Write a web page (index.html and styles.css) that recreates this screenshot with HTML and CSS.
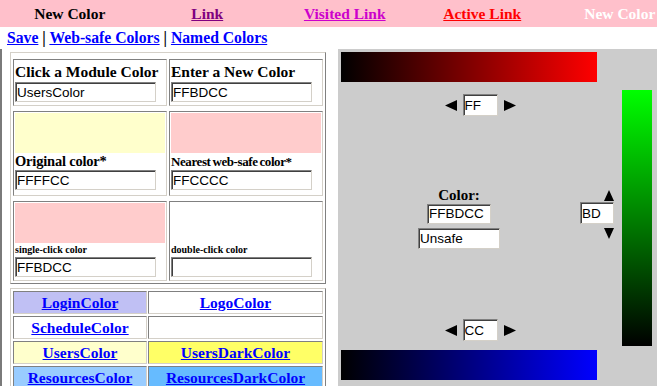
FILE: index.html
```html
<!DOCTYPE html>
<html lang="en">
<head>
    <meta charset="UTF-8">
    <meta name="viewport" content="width=device-width, initial-scale=1.0">
    <title>Module Colors</title>
    <link rel="stylesheet" href="styles.css">
</head>
<body>
    <div class="topbar">
        <div class="sample">New Color</div>
        <div class="sample"><a href="#" class="link">Link</a></div>
        <div class="sample"><a href="#" class="visited">Visited Link</a></div>
        <div class="sample"><a href="#" class="active">Active Link</a></div>
        <div class="sample light">New Color</div>
    </div>

    <div class="menu">
        <a href="#">Save</a> | <a href="#">Web-safe Colors</a> | <a href="#">Named Colors</a>
    </div>

    <div class="main">
        <div class="left">
            <div class="panel picker">
                <div class="box top">
                    <div class="heading">Click a Module Color</div>
                    <input class="field wide" type="text" value="UsersColor">
                </div>
                <div class="box top">
                    <div class="heading">Enter a New Color</div>
                    <input class="field wide" type="text" value="FFBDCC">
                </div>
                <div class="box mid">
                    <div class="swatch cream"></div>
                    <div class="caption">Original color*</div>
                    <input class="field wide" type="text" value="FFFFCC">
                </div>
                <div class="box mid">
                    <div class="swatch pink"></div>
                    <div class="caption tight">Nearest web-safe color*</div>
                    <input class="field wide" type="text" value="FFCCCC">
                </div>
                <div class="box low">
                    <div class="swatch pink"></div>
                    <div class="caption small">single-click color</div>
                    <input class="field wide" type="text" value="FFBDCC">
                </div>
                <div class="box low">
                    <div class="swatch"></div>
                    <div class="caption small">double-click color</div>
                    <input class="field wide" type="text" value="">
                </div>
            </div>

            <div class="panel modules">
                <div class="mod login"><a href="#">LoginColor</a></div>
                <div class="mod"><a href="#">LogoColor</a></div>
                <div class="mod"><a href="#">ScheduleColor</a></div>
                <div class="mod"></div>
                <div class="mod users"><a href="#">UsersColor</a></div>
                <div class="mod users-dark"><a href="#">UsersDarkColor</a></div>
                <div class="mod resources"><a href="#">ResourcesColor</a></div>
                <div class="mod resources-dark"><a href="#">ResourcesDarkColor</a></div>
            </div>
        </div>

        <div class="mixer">
            <div class="mix-col">
                <div class="bar red"></div>

                <div class="stepper first">
                    <svg class="arrow" width="12" height="11" viewBox="0 0 12 11"><polygon points="0,5.5 12,0 12,11"/></svg>
                    <input class="field hex" type="text" value="FF">
                    <svg class="arrow" width="12" height="11" viewBox="0 0 12 11"><polygon points="12,5.5 0,0 0,11"/></svg>
                </div>

                <div class="middle">
                    <div class="current">
                        <div class="current-label">Color:</div>
                        <input class="field value" type="text" value="FFBDCC">
                        <input class="field status" type="text" value="Unsafe">
                    </div>
                    <div class="vstep">
                        <svg class="arrow up" width="10" height="11" viewBox="0 0 10 11"><polygon points="5,0 10,11 0,11"/></svg>
                        <input class="field hex" type="text" value="BD">
                        <svg class="arrow down" width="10" height="11" viewBox="0 0 10 11"><polygon points="0,0 10,0 5,11"/></svg>
                    </div>
                </div>

                <div class="stepper">
                    <svg class="arrow" width="12" height="11" viewBox="0 0 12 11"><polygon points="0,5.5 12,0 12,11"/></svg>
                    <input class="field hex" type="text" value="CC">
                    <svg class="arrow" width="12" height="11" viewBox="0 0 12 11"><polygon points="12,5.5 0,0 0,11"/></svg>
                </div>

                <div class="bar blue"></div>
            </div>
            <div class="bar green"></div>
        </div>
    </div>
</body>
</html>
```

FILE: styles.css
```css
* {
    margin: 0;
    padding: 0;
    box-sizing: border-box;
}

html, body {
    overflow: hidden;
}

body {
    font-family: 'Liberation Serif', 'Times New Roman', serif;
    font-weight: bold;
    background: white;
    color: black;
}

a {
    color: #0000ff;
}

/* colour samples */
.topbar {
    display: flex;
    width: 690px;
    height: 27px;
    padding-left: 1px;
    background: #ffc0cb;
}

.sample {
    flex: 0 0 137.5px;
    text-align: center;
    line-height: 27px;
    font-size: 15.5px;
}

.sample .link {
    color: #800080;
}

.sample .visited {
    color: #cc00cc;
}

.sample .active {
    color: #ff0000;
}

.sample.light {
    color: white;
}

.menu {
    height: 22px;
    padding-left: 7px;
    font-size: 15.7px;
    line-height: 22px;
}

.main {
    display: flex;
    border-left: 2px solid #7a7a7a;
}

/* left side */
.left {
    width: 336px;
    padding: 3px 0 0 8px;
}

.panel {
    width: 316px;
    padding: 2px;
    border: 1px solid;
    border-color: #d4d0c8 #808080 #808080 #d4d0c8;
}

.picker {
    display: grid;
    grid-template-columns: 154px 154px;
    column-gap: 2px;
    row-gap: 5px;
    padding-top: 6px;
}

.box {
    padding: 1px;
    border: 1px solid;
    border-color: #808080 #d4d0c8 #d4d0c8 #808080;
}

.box.top {
    height: 47px;
}

.box.mid {
    height: 85px;
}

.box.low {
    height: 80px;
}

.heading {
    font-size: 15.5px;
    line-height: 21px;
    white-space: nowrap;
}

.swatch {
    height: 40px;
    background: white;
}

.swatch.cream {
    background: #ffffcc;
}

.swatch.pink {
    background: #ffcccc;
}

.caption {
    font-size: 14.5px;
    line-height: 17px;
    white-space: nowrap;
    letter-spacing: -0.2px;
}

.caption.tight {
    font-size: 13px;
    letter-spacing: -0.4px;
    word-spacing: -1px;
}

.caption.small {
    font-size: 10px;
    line-height: 14px;
    letter-spacing: 0;
}

.field {
    display: block;
    height: 20px;
    padding: 0 1px;
    border: 1px solid;
    border-color: #808080 #d4d0c8 #d4d0c8 #808080;
    box-shadow: inset 1px 1px 0 #404040;
    background: white;
    font-family: 'Liberation Sans', Arial, sans-serif;
    font-size: 13.5px;
    color: black;
    outline: none;
}

.field.wide {
    width: 141px;
}

.modules {
    display: grid;
    grid-template-columns: 134px 175px;
    column-gap: 1px;
    row-gap: 2px;
    margin-top: 4px;
}

.mod {
    height: 23px;
    border: 1px solid;
    border-color: #808080 #d4d0c8 #d4d0c8 #808080;
    background: white;
    text-align: center;
    font-size: 15.5px;
    line-height: 21px;
}

.mod.login {
    background: #c0c0f4;
}

.mod.users {
    background: #ffffcc;
}

.mod.users-dark {
    background: #ffff66;
}

.mod.resources {
    background: #99ccff;
}

.mod.resources-dark {
    background: #66bbff;
}

/* right side mixer */
.mixer {
    display: flex;
    gap: 3px;
    flex: 1;
    height: 337px;
    padding: 3px;
    background: #cccccc;
}

.mix-col {
    width: 278px;
}

.bar {
    width: 256px;
    height: 30px;
}

.bar.red {
    background: linear-gradient(to right, #000000, #ff0000);
}

.bar.blue {
    margin-top: 9px;
    background: linear-gradient(to right, #000000, #0000ff);
}

.bar.green {
    width: 30px;
    height: 256px;
    margin-top: 38px;
    background: linear-gradient(to bottom, #00ff00, #000000);
}

.stepper {
    display: flex;
    align-items: center;
    justify-content: center;
    gap: 6px;
    height: 22px;
}

.stepper.first {
    margin-top: 12px;
}

.arrow {
    display: block;
    fill: black;
}

.field.hex {
    width: 35px;
    height: 22px;
}

.middle {
    display: flex;
    align-items: center;
    height: 203px;
}

.current {
    flex: 1;
    display: flex;
    flex-direction: column;
    align-items: center;
}

.current-label {
    font-size: 15px;
    line-height: 17px;
}

.field.value {
    width: 64px;
}

.field.status {
    width: 82px;
    height: 21px;
    margin-top: 4px;
}

.vstep {
    width: 42px;
    padding-right: 5px;
    display: flex;
    flex-direction: column;
    align-items: flex-end;
    margin-top: -6px;
}

.vstep .field.hex {
    width: 34px;
    margin: 1px 0 4px;
}
```
